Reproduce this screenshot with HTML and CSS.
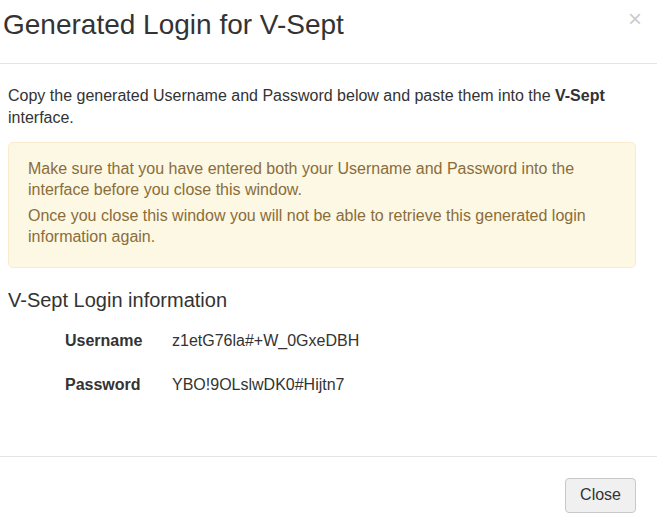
FILE: index.html
```html
<!DOCTYPE html>
<html lang="en">
<head>
  <meta charset="UTF-8">
  <title>Generated Login for V-Sept</title>
  <link rel="stylesheet" href="styles.css">
</head>
<body>
  <div class="modal">
    <!-- Header -->
    <div class="modal-header">
      <h3 class="modal-title">Generated Login for V-Sept</h3>
      <button type="button" class="close">&times;</button>
    </div>

    <!-- Body -->
    <div class="modal-body">
      <p class="intro">Copy the generated Username and Password below and paste them into the <strong>V-Sept</strong> interface.</p>

      <div class="alert">
        <p>Make sure that you have entered both your Username and Password into the interface before you close this window.</p>
        <p>Once you close this window you will not be able to retrieve this generated login information again.</p>
      </div>

      <h4 class="login-title">V-Sept Login information</h4>
      <table class="login-info">
        <tr>
          <th>Username</th>
          <td>z1etG76la#+W_0GxeDBH</td>
        </tr>
        <tr>
          <th>Password</th>
          <td>YBO!9OLslwDK0#Hijtn7</td>
        </tr>
      </table>
    </div>

    <!-- Footer -->
    <div class="modal-footer">
      <button type="button" class="btn">Close</button>
    </div>
  </div>
</body>
</html>
```

FILE: styles.css
```css
body {
  margin: 0;
  font-family: "Liberation Sans", Arial, sans-serif;
  font-size: 16px;
  color: #333;
  background-color: #fff;
}

.modal {
  width: 657px;
}

.modal-header {
  display: flex;
  justify-content: space-between;
  align-items: flex-start;
  padding: 10px 15px 22px 3px;
  border-bottom: 1px solid #e5e5e5;
}

.modal-title {
  margin: 0;
  font-size: 28px;
  font-weight: normal;
  line-height: 1.1;
}

.close {
  margin-top: -3px;
  padding: 0;
  border: 0;
  background: none;
  font-family: "Liberation Sans", Arial, sans-serif;
  font-size: 24px;
  font-weight: normal;
  line-height: 1;
  color: #000;
  opacity: 0.2;
  cursor: pointer;
}

.modal-body {
  padding: 21px 21px 49px 8px;
}

.intro {
  margin: 0 0 13px;
  line-height: 22px;
}

.alert {
  padding: 15px 17px 15px 19px;
  border: 1px solid #faebcc;
  border-radius: 5px;
  background-color: #fcf8e3;
  color: #8a6d3b;
  line-height: 21px;
  margin-bottom: 21px;
}

.alert p {
  margin: 0 0 5px;
}

.login-title {
  margin: 0 0 8px;
  font-size: 20px;
  font-weight: normal;
  line-height: 22px;
}

.login-info {
  border-collapse: collapse;
  margin-left: 57px;
}

.login-info th,
.login-info td {
  height: 44px;
  padding: 0;
  text-align: left;
  vertical-align: middle;
}

.login-info th {
  width: 107px;
}

.modal-footer {
  display: flex;
  justify-content: flex-end;
  padding: 21px 21px 15px;
  border-top: 1px solid #e5e5e5;
}

.btn {
  padding: 0 14px;
  height: 35px;
  font-family: "Liberation Sans", Arial, sans-serif;
  font-size: 16px;
  color: #333;
  background-color: #f0f0f0;
  border: 1px solid #c8c8c8;
  border-radius: 4px;
  cursor: pointer;
}
```
